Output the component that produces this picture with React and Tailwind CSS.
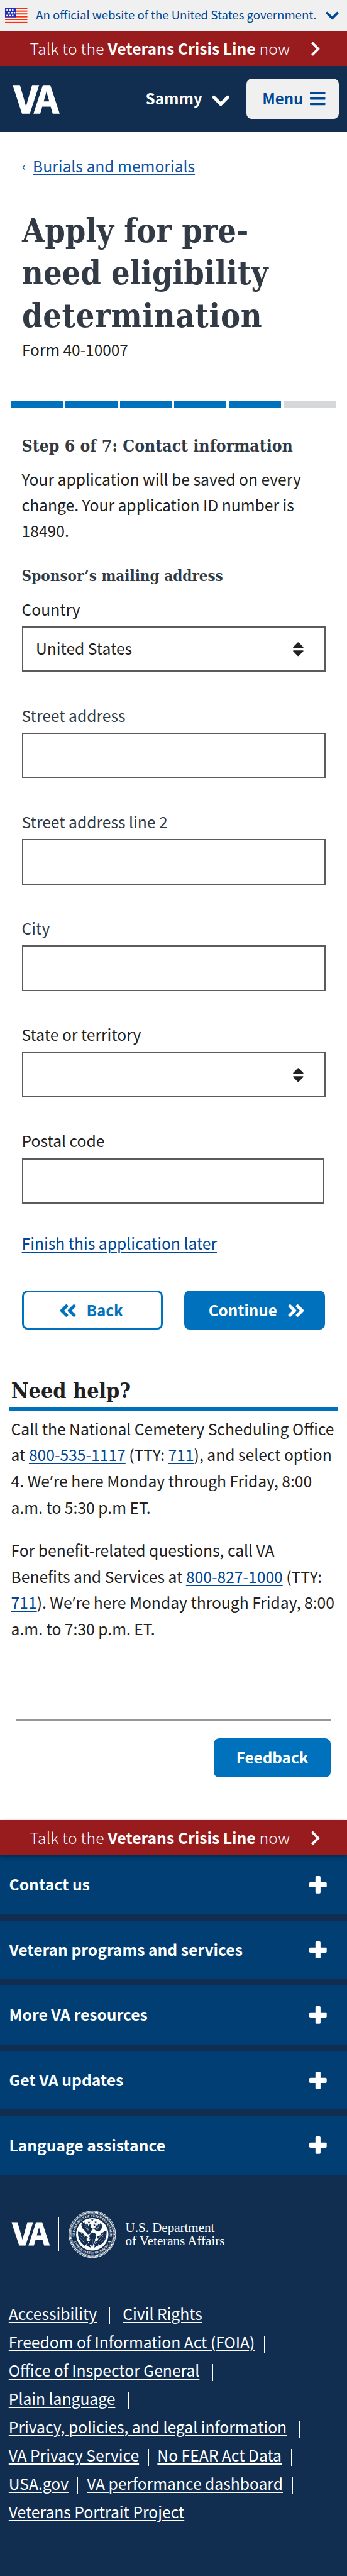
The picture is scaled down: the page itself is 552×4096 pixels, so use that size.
import {
  FaChevronDown,
  FaChevronRight,
  FaAngleDoubleLeft,
  FaAngleDoubleRight,
} from "react-icons/fa";

const LINK =
  "underline decoration-[1.7px] underline-offset-[3px] text-[#004795]";

function Flag() {
  const stars = [
    [2.2, 2.4], [6.8, 2.4], [11, 2.4],
    [5.1, 7], [9.7, 7], [13.8, 7],
    [2.2, 11.6], [6.8, 11.6], [11, 11.6],
  ];
  return (
    <svg className="h-[25px] w-[35.6px] shrink-0" viewBox="0 0 35.6 25">
      <rect width="35.6" height="25" fill="#fff" />
      {[0, 4.6, 9.2, 13.6, 18, 22.8].map((y) => (
        <rect key={y} y={y} width="35.6" height="2.1" fill="#f2330d" />
      ))}
      <rect width="17.9" height="15.6" fill="#232fbb" />
      {stars.map(([x, y], i) => (
        <rect key={i} x={x} y={y} width="2.5" height="2.5" fill="#fff" />
      ))}
    </svg>
  );
}

function VaMark({ className }) {
  return (
    <svg className={className} viewBox="0 0 73 45">
      <text
        y="44.5"
        fontSize="60"
        fontWeight="700"
        fontFamily="'Noto Sans CJK SC', sans-serif"
        fill="#fff"
        stroke="#fff"
        strokeWidth="1.4"
      >
        <tspan x="0.5" textLength="39.4" lengthAdjust="spacingAndGlyphs">V</tspan>
        <tspan x="33.6" textLength="39.2" lengthAdjust="spacingAndGlyphs">A</tspan>
      </text>
    </svg>
  );
}

function Seal() {
  return (
    <svg className="ml-[15.5px] h-[75.6px] w-[75.6px] shrink-0" viewBox="0 0 100 100">
      <defs>
        <path id="seal-top" d="M 14.5 60.3 A 37 37 0 1 1 85.5 60.3" />
        <path id="seal-bottom" d="M 9.9 60 A 41.3 41.3 0 0 0 90.1 60" />
      </defs>
      <circle cx="50" cy="50" r="49" fill="none" stroke="#fff" strokeWidth="1.2" />
      <circle cx="50" cy="50" r="46.3" fill="none" stroke="#fff" strokeWidth="3" strokeDasharray="1.7 0.9" />
      <circle cx="50" cy="50" r="44" fill="none" stroke="#fff" strokeWidth="0.7" />
      <g fill="#fff" fontFamily="'Liberation Serif', serif" fontWeight="700" fontSize="6.6">
        <text textLength="126" lengthAdjust="spacingAndGlyphs">
          <textPath href="#seal-top" startOffset="5.5">DEPARTMENT OF VETERANS AFFAIRS</textPath>
        </text>
        <text textLength="99" lengthAdjust="spacingAndGlyphs">
          <textPath href="#seal-bottom" startOffset="5.3">UNITED STATES OF AMERICA</textPath>
        </text>
      </g>
      <circle cx="50" cy="50" r="34" fill="#fff" />
      <g fill="#112e51">
        {[[50, 20], [43, 24.5], [57, 24.5], [45.5, 31], [54.5, 31]].map(([x, y], i) => (
          <path
            key={i}
            transform={`translate(${x} ${y})`}
            d="M0-3 .8-1 2.9-.9 1.2.4 1.8 2.5 0 1.3-1.8 2.5-1.2.4-2.9-.9-.8-1Z"
          />
        ))}
        <path d="M28 26c-2 5 0 10 4 14l9 10 5-2c1-6 4-9 8-9l3 3 6 2c6-3 9-9 8-17l-3 4-1-5-3 6-1-5-3 7-2-5-2 8-5 1-4-2-3-8-2 5-3-8-2 5-3-7-1 6-5-9Z" />
        <path d="M45 50c3-5 8-5 12-1 3 5 1 9-2 12l3 10-4 3-2-5-2 9-3-8-4 5-2-5 4-8c-2-4-2-8 0-12Z" />
        <path d="M20 44c-1 13 4 23 14 30l9-9-6-3 4-6-7-3-3-6Z" />
        <path d="M80 42c1 14-3 24-14 31l-9-8 6-3-3-7 7-3 3-6Z" />
        <path d="M38 66l6 5 3 7-9-4ZM62 65l-6 6-2 7 9-5Z" />
      </g>
      <g stroke="#fff" fill="none">
        <path d="M20 37 44 57" strokeWidth="3" />
        <path d="M81 39 57 54" strokeWidth="2.4" />
        <path d="M23 50l13 14M27 48l11 11M24 58l10 10M77 50 64 64M73 49 62 59M76 59l-9 9" strokeWidth="1.1" strokeDasharray="2 1.2" />
        <path d="M33 31l9 12M37 31l6 11M66 31l-7 9M62 34l-5 6" strokeWidth="0.7" />
        <path d="M46 60l-5 9M53 61l3 9M50 60v10" strokeWidth="1" />
      </g>
    </svg>
  );
}

function CrisisLine({ className }) {
  return (
    <div
      className={`relative z-10 flex items-center bg-[#981b1e] pb-[1px] pl-[47.5px] whitespace-nowrap text-white ${className}`}
    >
      <span className="w-[446px] text-[24.65px] font-light tracking-[0.25px]">
        Talk to the{" "}
        <b className="text-[24.7px] font-bold tracking-normal">Veterans Crisis Line</b> now
      </span>
      <FaChevronRight className="mt-[2px] h-[25.5px] w-[15.9px]" />
    </div>
  );
}

function SortArrows() {
  return (
    <svg className="mt-[1px] h-[22.4px] w-[16.8px]" viewBox="0 0 16.8 22.4" fill="#212121">
      <path d="M7.6.5Q8.4-.2 9.2.5L16.2 7.4Q17.4 9.2 15.6 9.2H1.2Q-.6 9.2.6 7.4Z" />
      <path d="M7.6 21.9Q8.4 22.6 9.2 21.9L16.2 15Q17.4 13.3 15.6 13.3H1.2Q-.6 13.3.6 15Z" />
    </svg>
  );
}

function Field({ label, dark, select, value, narrow }) {
  return (
    <div>
      <div className={`h-[40px] leading-[40px] ${dark ? "text-[#212121]" : "text-[#323a45]"}`}>
        {label}
      </div>
      <div
        className={`mt-[8.35px] flex h-[72.4px] items-center justify-between border-2 border-[#5b5b5b] pr-[33px] pl-[20.3px] ${narrow ? "w-[481.5px]" : "w-[483.4px]"}`}
      >
        <span className="pb-[3px]">{value}</span>
        {select && <SortArrows />}
      </div>
    </div>
  );
}

function Line({ children }) {
  return <span className="block whitespace-nowrap">{children}</span>;
}

function Apostrophe() {
  return <span className="px-[0.8px] font-['Open_Sans',sans-serif] leading-none">’</span>;
}

function FooterLink({ children }) {
  return (
    <span className="underline decoration-[1.7px] underline-offset-[3px]">{children}</span>
  );
}

function Bar({ className }) {
  return <i className={`mt-[13px] block h-[27px] w-[1.7px] bg-white ${className}`} />;
}

function FooterRow({ title }) {
  return (
    <div className="flex h-[93.2px] items-center justify-between bg-[#003e73] pr-[32.3px] pl-[14.5px] text-white">
      <span className="pb-[2px] font-bold">{title}</span>
      <svg className="h-[27.7px] w-[27.7px]" viewBox="0 0 27.7 27.7" fill="#fff">
        <rect x="9.8" width="8.1" height="27.7" rx="1.7" />
        <rect y="9.8" width="27.7" height="8.1" rx="1.7" />
      </svg>
    </div>
  );
}

export default function App() {
  return (
    <div className="h-[4096px] w-[552px] overflow-hidden bg-white font-['Noto_Sans_CJK_SC',sans-serif] text-[24.65px] text-[#212121]">
      <div className="flex h-[49.2px] items-center bg-[#f0f0f0] pl-[8.4px] whitespace-nowrap text-[#004795]">
        <Flag />
        <span className="ml-[13.2px] w-[461px] pb-[4px] text-[18.6px]">
          An official website of the United States government.
        </span>
        <FaChevronDown className="h-[24px] w-[21px]" />
      </div>

      <CrisisLine className="h-[55.4px]" />

      <header className="flex h-[105.1px] items-center bg-[#112e51] pl-[21px] text-white">
        <VaMark className="h-[45px] w-[73px] overflow-visible" />
        <span className="ml-[137.5px] w-[105px] pb-[1px] text-[24.3px] font-bold">Sammy</span>
        <FaChevronDown className="mt-[6px] h-[32.4px] w-[28.4px]" />
        <div className="ml-[27px] flex h-[64px] w-[146.7px] items-center rounded-[8.6px] bg-[#f0f0f0] pl-[25.4px] text-[#004795]">
          <span className="w-[76.2px] pb-[2px] text-[24px] font-bold">Menu</span>
          <svg className="h-[21.4px] w-[24.5px]" viewBox="0 0 24.5 21.4" fill="#004795">
            <rect width="24.5" height="3.8" rx="1" />
            <rect y="8.8" width="24.5" height="3.8" rx="1" />
            <rect y="17.5" width="24.5" height="3.8" rx="1" />
          </svg>
        </div>
      </header>

      <main>
        <section className="px-[35px]">
          <nav className="flex h-[74.8px] items-end text-[#0d54a8] leading-[41.5px]">
            <span className="w-[17px] text-[20px] text-[#004795]">‹</span>
            <span className="underline decoration-[1.7px] underline-offset-[3px]">
              Burials and memorials
            </span>
          </nav>
          <h1 className="mt-[48.6px] font-['DejaVu_Serif_Condensed','DejaVu_Serif',serif] text-[51.8px] leading-[67.4px] font-bold text-[#323a45]">
            <Line>Apply for pre-</Line>
            <Line>need eligibility</Line>
            <span className="block tracking-[0.7px] whitespace-nowrap">determination</span>
          </h1>
          <p className="h-[40px] pt-[0.5px] text-[24.45px] leading-[40px]">Form 40-10007</p>
        </section>

        <div className="mt-[63.2px] flex h-[9.8px] gap-[3.7px] pl-[17.2px]">
          <div className="w-[83px] bg-[#0071bc]" />
          <div className="w-[83px] bg-[#0071bc]" />
          <div className="w-[83px] bg-[#0071bc]" />
          <div className="w-[83px] bg-[#0071bc]" />
          <div className="w-[83px] bg-[#0071bc]" />
          <div className="w-[83px] bg-[#d6d7d9]" />
        </div>

        <section className="px-[34.6px]">
          <h2 className="mt-[40.5px] h-[40px] font-['DejaVu_Serif_Condensed','DejaVu_Serif',serif] text-[26.4px] leading-[40px] font-bold whitespace-nowrap text-[#323a45]">
            Step 6 of 7: Contact information
          </h2>
          <p className="mt-[11.9px] leading-[41.4px]">
            <Line>Your application will be saved on every</Line>
            <Line>change. Your application ID number is</Line>
            <Line>18490.</Line>
          </p>
          <h3 className="mt-[33.6px] h-[36px] font-['DejaVu_Serif_Condensed','DejaVu_Serif',serif] text-[24px] leading-[36px] font-bold whitespace-nowrap text-[#323a45]">
            Sponsor’s mailing address
          </h3>
          <div className="mt-[13.1px] flex flex-col gap-[48.4px]">
            <Field label="Country" dark select value="United States" />
            <Field label="Street address" />
            <Field label="Street address line 2" />
            <Field label="City" />
            <Field label="State or territory" dark select />
            <Field label="Postal code" dark narrow />
          </div>
          <p className={`mt-[41.9px] h-[40px] leading-[40px] ${LINK}`}>
            Finish this application later
          </p>
          <div className="mt-[56.1px] flex gap-[34.4px] text-[24.2px] font-bold">
            <div className="flex h-[62.1px] w-[224.5px] items-center rounded-[8.6px] border-[3.45px] border-[#0071bc] pl-[56.4px] text-[#0071bc]">
              <FaAngleDoubleLeft className="mt-[3px] h-[32px] w-[28px]" />
              <span className="ml-[15.5px]">Back</span>
            </div>
            <div className="flex h-[62.1px] w-[224.5px] items-center rounded-[8.6px] bg-[#0071bc] pl-[38.5px] text-white">
              <span className="w-[125px]">Continue</span>
              <FaAngleDoubleRight className="mt-[3px] h-[32px] w-[28px]" />
            </div>
          </div>
        </section>

        <section className="mt-[71.9px]">
          <h2 className="ml-[14.8px] h-[57.2px] w-[523px] border-b-[5px] border-[#0071bc] pl-[3px] font-['DejaVu_Serif_Condensed','DejaVu_Serif',serif] text-[33.8px] leading-[50px] font-bold">
            Need help?
          </h2>
          <p className="mt-[7.8px] pl-[17.6px] leading-[41.6px]">
            <Line>Call the National Cemetery Scheduling Office</Line>
            <Line>
              at <span className={LINK}>800-535-1117</span> (TTY: <span className={LINK}>711</span>
              ), and select option
            </Line>
            <Line>
              4. We
              <Apostrophe />
              re here Monday through Friday, 8:00
            </Line>
            <Line>a.m. to 5:30 p.m ET.</Line>
          </p>
          <p className="mt-[27px] pl-[17.6px] leading-[41.6px]">
            <Line>For benefit-related questions, call VA</Line>
            <Line>
              Benefits and Services at <span className={LINK}>800-827-1000</span> (TTY:
            </Line>
            <Line>
              <span className={LINK}>711</span>). We
              <Apostrophe />
              re here Monday through Friday, 8:00
            </Line>
            <Line>a.m. to 7:30 p.m. ET.</Line>
          </p>
        </section>

        <section className="mt-[123.5px] mr-[25.8px] ml-[25.8px] flex h-[160.1px] flex-col items-end border-t-2 border-[#979797]">
          <div className="mt-[27.5px] flex h-[62px] w-[186.3px] items-center justify-center rounded-[8.6px] bg-[#0071bc] text-[24.3px] font-bold text-white">
            Feedback
          </div>
        </section>
      </main>

      <CrisisLine className="h-[56px] shadow-[0_2px_6px_rgba(0,0,0,0.35)]" />

      <footer className="h-[1200px] bg-[#112e51] text-white">
        <div className="flex flex-col gap-[10.36px]">
          <FooterRow title="Contact us" />
          <FooterRow title="Veteran programs and services" />
          <FooterRow title="More VA resources" />
          <FooterRow title="Get VA updates" />
          <FooterRow title="Language assistance" />
        </div>

        <div className="mt-[57.3px] flex h-[75.6px] items-center pl-[19px]">
          <VaMark className="h-[36.7px] w-[59.5px] overflow-visible" />
          <i className="ml-[14px] block h-[54.5px] w-[1.2px] bg-white" />
          <Seal />
          <div className="mt-[1px] ml-[14.8px] font-['Liberation_Serif',serif] text-[21px] leading-[21px] whitespace-nowrap">
            <Line>U.S. Department</Line>
            <Line>of Veterans Affairs</Line>
          </div>
        </div>

        <div className="mt-[65.9px] pl-[13.8px] leading-[44.93px] whitespace-nowrap">
          <div className="flex h-[44.93px]">
            <FooterLink>Accessibility</FooterLink>
            <Bar className="mr-[20px] ml-[19.5px]" />
            <FooterLink>Civil Rights</FooterLink>
          </div>
          <div className="flex h-[44.93px]">
            <FooterLink>Freedom of Information Act (FOIA)</FooterLink>
            <Bar className="ml-[15px]" />
          </div>
          <div className="flex h-[44.93px]">
            <FooterLink>Office of Inspector General</FooterLink>
            <Bar className="ml-[20px]" />
          </div>
          <div className="flex h-[44.93px]">
            <FooterLink>Plain language</FooterLink>
            <Bar className="ml-[20px]" />
          </div>
          <div className="flex h-[44.93px]">
            <FooterLink>Privacy, policies, and legal information</FooterLink>
            <Bar className="ml-[20px]" />
          </div>
          <div className="flex h-[44.93px]">
            <FooterLink>VA Privacy Service</FooterLink>
            <Bar className="mr-[13.5px] ml-[14px]" />
            <FooterLink>No FEAR Act Data</FooterLink>
            <Bar className="ml-[14.5px]" />
          </div>
          <div className="flex h-[44.93px]">
            <FooterLink>USA.gov</FooterLink>
            <Bar className="mr-[14px] ml-[13.5px]" />
            <FooterLink>VA performance dashboard</FooterLink>
            <Bar className="ml-[14.5px]" />
          </div>
          <div className="flex h-[44.93px]">
            <FooterLink>Veterans Portrait Project</FooterLink>
          </div>
        </div>
      </footer>
    </div>
  );
}
